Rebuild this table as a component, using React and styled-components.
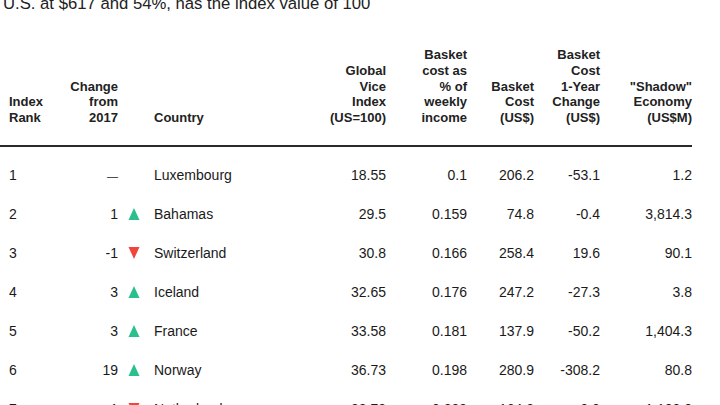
import * as React from "react";
import styled, { createGlobalStyle } from "styled-components";

const GlobalStyle = createGlobalStyle`
  html, body {
    margin: 0;
    padding: 0;
    background: #ffffff;
    overflow: hidden;
  }
  body {
    font-family: "Liberation Sans", Arial, sans-serif;
    color: #1e1e1e;
  }
`;

const COLUMNS = "60px 58px 36px 146px 86px 81px 67px 66px 92px";

const Page = styled.div`
  width: 720px;
  height: 405px;
  overflow: hidden;
`;

const Intro = styled.p`
  margin: -8px 0 0 3px;
  font-size: 16.7px;
  line-height: 24px;
  color: #222;
`;

const HeaderRow = styled.div`
  display: grid;
  grid-template-columns: ${COLUMNS};
  align-items: end;
  margin-top: 31px;
  padding-bottom: 19px;
  border-bottom: 2px solid #2a2a2a;
  width: 692px;
`;

const HeadCell = styled.div`
  font-size: 13px;
  font-weight: 700;
  line-height: 15.75px;
  color: #222;
  text-align: ${(p) => (p.$right ? "right" : "left")};
  padding-left: ${(p) => (p.$first ? "9px" : "0")};
  white-space: nowrap;
`;

const Body = styled.div`
  padding-top: 9px;
`;

const Row = styled.div`
  display: grid;
  grid-template-columns: ${COLUMNS};
  align-items: center;
  height: 39px;
  width: 692px;
`;

const Cell = styled.div`
  font-size: 14px;
  line-height: 18px;
  color: #1a1a1a;
  text-align: ${(p) => (p.$right ? "right" : "left")};
  padding-left: ${(p) => (p.$first ? "9px" : "0")};
  white-space: nowrap;
`;

const Dash = styled.span`
  font-size: 11px;
`;

const ArrowCell = styled.div`
  display: flex;
  align-items: center;
  padding-left: 10px;
`;

const Triangle = ({ up }) => (
  <svg width="12" height="12" viewBox="0 0 12 12">
    {up ? (
      <polygon points="6,0 11.5,12 0.5,12" fill="#2ac08c" />
    ) : (
      <polygon points="0.5,0 11.5,0 6,12" fill="#f0453a" />
    )}
  </svg>
);

const rows = [
  { rank: 1, change: null, country: "Luxembourg", vice: "18.55", pct: "0.1", cost: "206.2", yr: "-53.1", shadow: "1.2" },
  { rank: 2, change: 1, country: "Bahamas", vice: "29.5", pct: "0.159", cost: "74.8", yr: "-0.4", shadow: "3,814.3" },
  { rank: 3, change: -1, country: "Switzerland", vice: "30.8", pct: "0.166", cost: "258.4", yr: "19.6", shadow: "90.1" },
  { rank: 4, change: 3, country: "Iceland", vice: "32.65", pct: "0.176", cost: "247.2", yr: "-27.3", shadow: "3.8" },
  { rank: 5, change: 3, country: "France", vice: "33.58", pct: "0.181", cost: "137.9", yr: "-50.2", shadow: "1,404.3" },
  { rank: 6, change: 19, country: "Norway", vice: "36.73", pct: "0.198", cost: "280.9", yr: "-308.2", shadow: "80.8" },
  { rank: 7, change: -1, country: "Netherlands", vice: "38.78", pct: "0.209", cost: "164.8", yr: "-9.9", shadow: "1,100.0" }
];

const App = () => {
  return (
    <Page>
      <GlobalStyle />
      <Intro>U.S. at $617 and 54%, has the index value of 100</Intro>
      <HeaderRow>
        <HeadCell $first>
          Index
          <br />
          Rank
        </HeadCell>
        <HeadCell $right>
          Change
          <br />
          from
          <br />
          2017
        </HeadCell>
        <HeadCell />
        <HeadCell>Country</HeadCell>
        <HeadCell $right>
          Global
          <br />
          Vice
          <br />
          Index
          <br />
          (US=100)
        </HeadCell>
        <HeadCell $right>
          Basket
          <br />
          cost as
          <br />% of
          <br />
          weekly
          <br />
          income
        </HeadCell>
        <HeadCell $right>
          Basket
          <br />
          Cost
          <br />
          (US$)
        </HeadCell>
        <HeadCell $right>
          Basket
          <br />
          Cost
          <br />
          1-Year
          <br />
          Change
          <br />
          (US$)
        </HeadCell>
        <HeadCell $right>
          "Shadow"
          <br />
          Economy
          <br />
          (US$M)
        </HeadCell>
      </HeaderRow>
      <Body>
        {rows.map((r) => (
          <Row key={r.rank}>
            <Cell $first>{r.rank}</Cell>
            <Cell $right>{r.change === null ? <Dash>—</Dash> : r.change}</Cell>
            <ArrowCell>
              {r.change !== null ? <Triangle up={r.change > 0} /> : null}
            </ArrowCell>
            <Cell>{r.country}</Cell>
            <Cell $right>{r.vice}</Cell>
            <Cell $right>{r.pct}</Cell>
            <Cell $right>{r.cost}</Cell>
            <Cell $right>{r.yr}</Cell>
            <Cell $right>{r.shadow}</Cell>
          </Row>
        ))}
      </Body>
    </Page>
  );
};

export default App;
